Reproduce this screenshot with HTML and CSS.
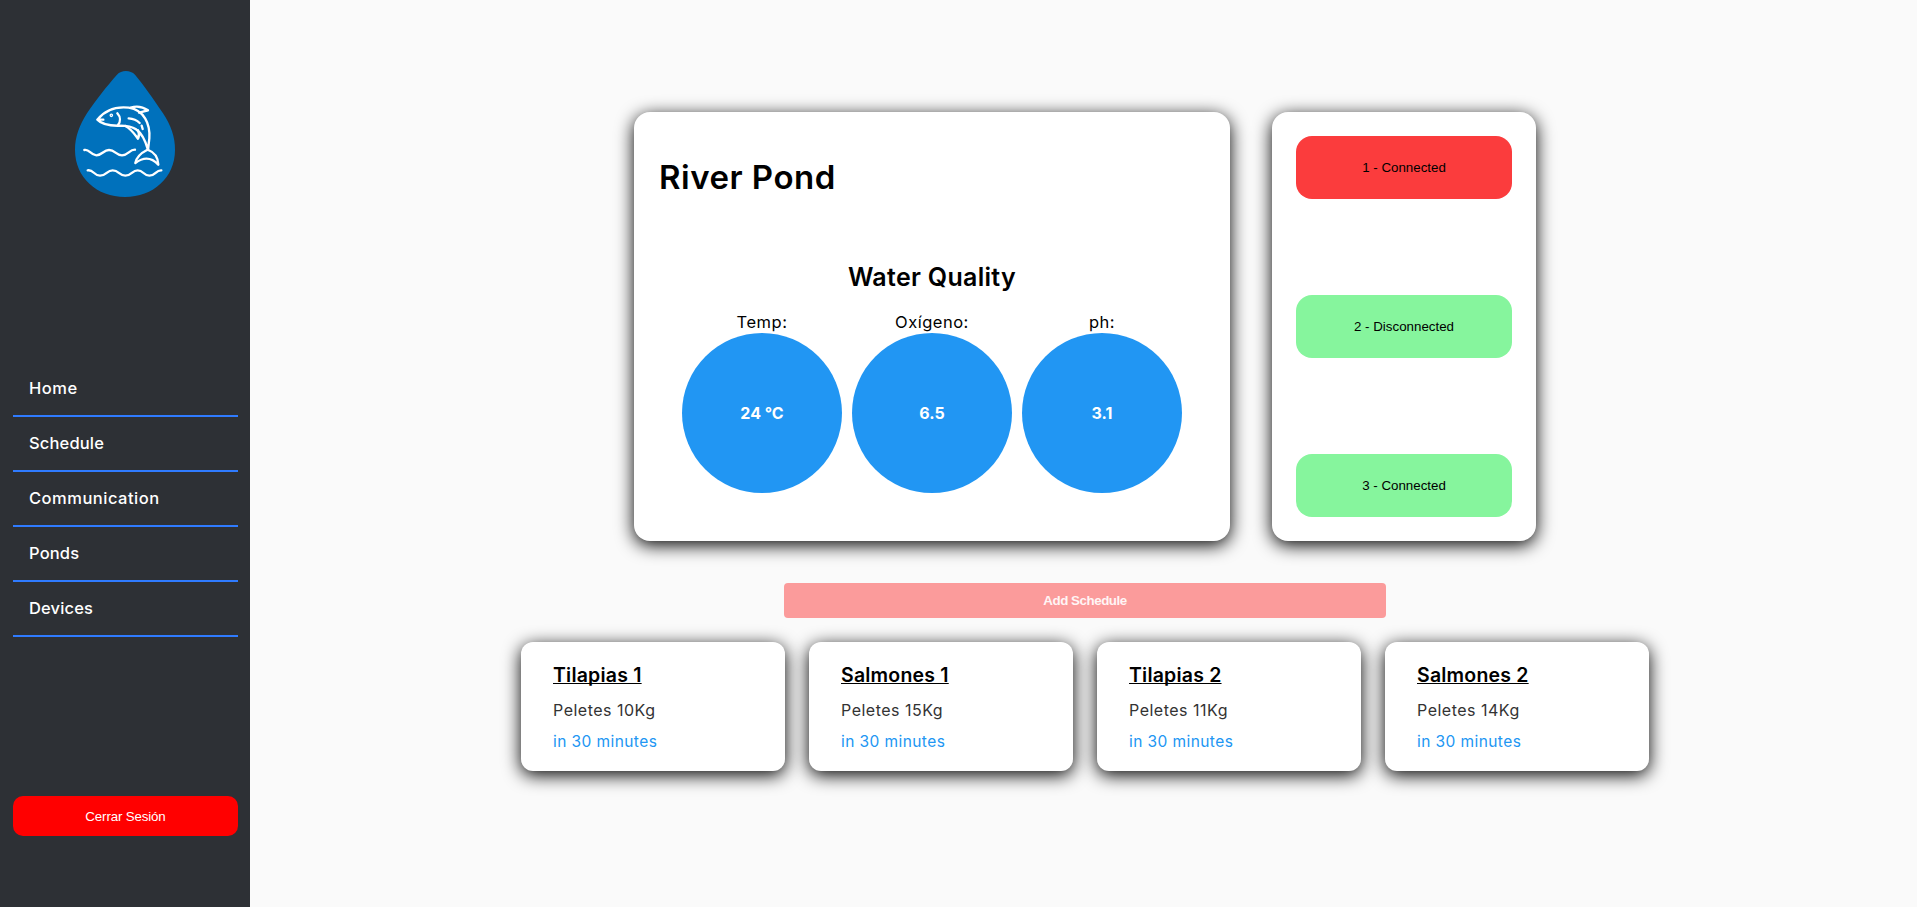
FILE: index.html
```html
<!DOCTYPE html>
<html lang="en">
<head>
<meta charset="utf-8">
<title>River Pond</title>
<link rel="stylesheet" href="styles.css">
</head>
<body>
<aside class="sidebar">
  <svg class="logo" viewBox="0 0 390 435" fill="none" stroke="#fff" stroke-width="7" stroke-linecap="round" stroke-linejoin="round">
    <path d="M171 44C184 29 211 29 225 44C250 74 282 119 309 160C333 197 345 230 345 270C345 353 279 411 195 411C111 411 45 353 45 270C45 230 58 197 81 160C108 119 141 78 171 44Z" fill="#0071bc" stroke="none"/>
    <path d="M112 179C136 149 169 139 206 143C253 150 271 193 268 235L264 270C257 244 247 221 228 208C212 197 196 197 180 197C151 198 126 194 112 179L130 179"/>
    <path d="M172 160C182 171 182 185 174 195M212 143C230 137 245 138 264 151C252 154 245 157 237 158M196 198C214 207 224 223 234 236C239 225 237 217 234 211M206 175C220 176 231 181 239 189M245 197L248 207"/>
    <path d="M261 270C239 281 229 294 226 309C250 291 273 290 295 314C294 293 284 277 265 270"/>
    <circle cx="154" cy="166" r="2"/>
    <path d="M73 270C88 266 91 285 109 286C128 285 130 270 147 270C166 270 167 286 186 286C206 285 207 269 225 269M83 331C101 328 101 347 120 347C140 347 140 331 158 331C177 331 178 347 196 347C215 347 216 331 233 331C251 331 250 347 268 347C287 347 287 330 304 331"/>
  </svg>
  <nav class="menu">
    <a class="item wide">Home</a>
    <a class="item">Schedule</a>
    <a class="item wide">Communication</a>
    <a class="item">Ponds</a>
    <a class="item">Devices</a>
  </nav>
  <button class="logout">Cerrar Sesión</button>
</aside>
<main class="main">
  <div class="top">
    <section class="card pond">
      <h1 class="title">River Pond</h1>
      <h2 class="subtitle">Water Quality</h2>
      <div class="gauges">
        <div class="gauge"><span class="label">Temp:</span><div class="circle">24 °C</div></div>
        <div class="gauge"><span class="label">Oxígeno:</span><div class="circle">6.5</div></div>
        <div class="gauge"><span class="label">ph:</span><div class="circle">3.1</div></div>
      </div>
    </section>
    <section class="card devices">
      <button class="device alert">1 - Connected</button>
      <button class="device">2 - Disconnected</button>
      <button class="device">3 - Connected</button>
    </section>
  </div>
  <button class="add">Add Schedule</button>
  <div class="schedules">
    <article class="card schedule">
      <h3 class="name">Tilapias 1</h3>
      <p class="feed">Peletes 10Kg</p>
      <p class="time">in 30 minutes</p>
    </article>
    <article class="card schedule">
      <h3 class="name">Salmones 1</h3>
      <p class="feed">Peletes 15Kg</p>
      <p class="time">in 30 minutes</p>
    </article>
    <article class="card schedule">
      <h3 class="name">Tilapias 2</h3>
      <p class="feed">Peletes 11Kg</p>
      <p class="time">in 30 minutes</p>
    </article>
    <article class="card schedule">
      <h3 class="name">Salmones 2</h3>
      <p class="feed">Peletes 14Kg</p>
      <p class="time">in 30 minutes</p>
    </article>
  </div>
</main>
</body>
</html>
```
FILE: styles.css
```css
* { box-sizing: border-box; }
body {
  margin: 0;
  height: 907px;
  display: flex;
  overflow: hidden;
  background: #fafafa;
  color: #000;
  font-family: Inter, "Liberation Sans", sans-serif;
  font-size: 16px;
}
h1, h2, h3, p { margin: 0; }
button {
  border: 0;
  padding: 0;
  font-family: "Liberation Sans", Arial, sans-serif;
  font-size: 13.333px;
}
.sidebar {
  width: 250px;
  flex: none;
  display: flex;
  flex-direction: column;
  padding: 60px 12px 0 13px;
  background: #2d3035;
}
.logo { width: 130px; height: 145px; margin-left: 47px; flex: none; }
.menu { margin-top: 157px; }
.item {
  display: block;
  height: 55px;
  padding: 16px 15px 0 16px;
  line-height: 20px;
  font-size: 16.5px;
  font-weight: 500;
  letter-spacing: 0.15px;
  color: #fff;
  border-bottom: 2px solid #2f7bff;
}
.item.wide { letter-spacing: 0.5px; }
.logout {
  margin-top: 159px;
  height: 40px;
  flex: none;
  border-radius: 10px;
  background: #f00;
  color: #fff;
  letter-spacing: -0.15px;
}
.main {
  flex: 1;
  display: flex;
  flex-direction: column;
  align-items: center;
  padding: 112px 0 0 3px;
}
.card { background: #fff; box-shadow: 0 4px 18px #000; }
.top { display: flex; gap: 42px; height: 429px; }
.pond {
  width: 596px;
  padding: 45px 24px 0;
  border-radius: 16px;
}
.title {
  padding-left: 1px;
  font-size: 33px;
  line-height: 40px;
  font-weight: 600;
  letter-spacing: 0.5px;
}
.subtitle {
  margin-top: 65px;
  font-size: 25px;
  line-height: 30px;
  font-weight: 600;
  letter-spacing: 0.3px;
  text-align: center;
}
.gauges { display: flex; justify-content: center; gap: 10px; margin-top: 20px; }
.gauge { display: flex; flex-direction: column; align-items: center; line-height: 20px; }
.label { font-size: 16.5px; letter-spacing: 0.5px; }
.circle {
  width: 160px;
  height: 160px;
  margin-top: 1px;
  display: flex;
  align-items: center;
  justify-content: center;
  border-radius: 50%;
  background: #2196f3;
  color: #fff;
  font-weight: 700;
}
.devices {
  width: 264px;
  display: flex;
  flex-direction: column;
  justify-content: space-between;
  padding: 24px;
  border-radius: 16px;
}
.device { height: 63px; border-radius: 16px; background: #86f59d; color: #000; }
.alert { background: #fb3c3d; }
.add {
  width: 602px;
  height: 35px;
  margin-top: 42px;
  flex: none;
  border-radius: 4px;
  background: #fb9b9b;
  color: #fff5f5;
  font-weight: 700;
  letter-spacing: -0.45px;
}
.schedules { display: flex; gap: 24px; margin-top: 24px; }
.schedule { width: 264px; height: 129px; padding: 20px 32px 0; border-radius: 12px; }
.name {
  font-size: 19.5px;
  line-height: 26px;
  font-weight: 600;
  letter-spacing: 0.2px;
  text-decoration: underline;
  text-decoration-skip-ink: none;
}
.feed { margin-top: 12px; font-size: 16px; line-height: 20px; letter-spacing: 0.5px; color: #333; }
.time { margin-top: 12px; font-size: 15.5px; line-height: 20px; letter-spacing: 0.42px; color: #2196f3; }
```
